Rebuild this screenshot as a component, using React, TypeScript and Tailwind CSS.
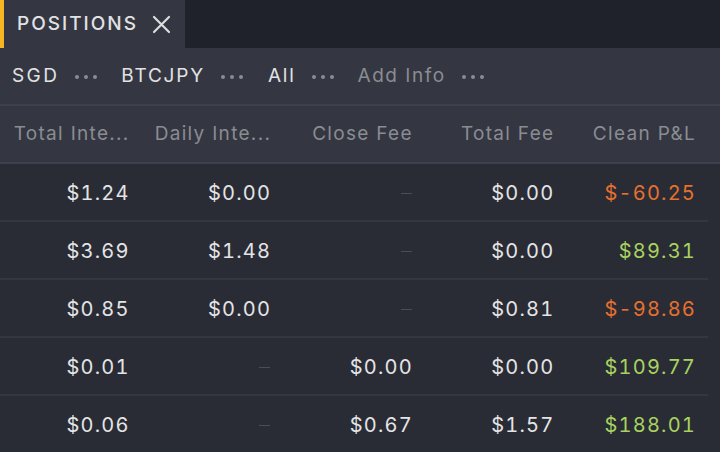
import React from "react";

const Dots = () => (
  <span className="flex items-center gap-[5px] ml-4 mr-6 mt-[1px]">
    <span className="w-[4px] h-[4px] rounded-full bg-[#8a8c93]" />
    <span className="w-[4px] h-[4px] rounded-full bg-[#8a8c93]" />
    <span className="w-[4px] h-[4px] rounded-full bg-[#8a8c93]" />
  </span>
);

type Cell = string | null;
const rows: { v: Cell[]; pnl: string; pos: boolean }[] = [
  { v: ["$1.24", "$0.00", null, "$0.00"], pnl: "$-60.25", pos: false },
  { v: ["$3.69", "$1.48", null, "$0.00"], pnl: "$89.31", pos: true },
  { v: ["$0.85", "$0.00", null, "$0.81"], pnl: "$-98.86", pos: false },
  { v: ["$0.01", null, "$0.00", "$0.00"], pnl: "$109.77", pos: true },
  { v: ["$0.06", null, "$0.67", "$1.57"], pnl: "$188.01", pos: true },
];

const headers = ["Total Inte...", "Daily Inte...", "Close Fee", "Total Fee", "Clean P&L"];

export default function App() {
  return (
    <div
      className="w-[720px] h-[452px] overflow-hidden bg-[#2a2c35] text-[#e4e4e6]"
      style={{ fontFamily: "Inter, 'Noto Sans', sans-serif" }}
    >
      {/* Tab bar */}
      <div className="h-[48px] bg-[#1f222a] flex">
        <div className="w-[185px] h-full bg-[#343741] flex items-center pt-[1px] relative">
          <div className="absolute left-0 top-0 bottom-0 w-[4px] bg-[#f7b523]" />
          <span className="ml-[17px] text-[19px] font-medium tracking-[2px] text-[#e2e2e4]">POSITIONS</span>
          <svg className="ml-[14px]" width="19" height="19" viewBox="0 0 19 19">
            <path d="M2 2L17 17M17 2L2 17" stroke="#dcdcde" strokeWidth="2.2" strokeLinecap="round" />
          </svg>
        </div>
      </div>
      {/* Toolbar */}
      <div className="h-[58px] bg-[#343741] flex items-center pl-[12px] text-[19px] tracking-[1.8px] border-b-[2px] border-[#3e414b]">
        <span className="text-[#e2e2e4] tracking-[2.4px]">SGD</span>
        <Dots />
        <span className="text-[#e2e2e4]">BTCJPY</span>
        <Dots />
        <span className="text-[#e2e2e4] ml-[1px]">All</span>
        <Dots />
        <span className="text-[#8a8c93] tracking-[1.5px]">Add Info</span>
        <Dots />
      </div>
      {/* Header */}
      <div className="h-[58px] bg-[#343741] border-b-[2px] border-[#3e414b] flex">
        <div className="w-[708px] grid grid-cols-5">
          {headers.map((h) => (
            <div key={h} className="flex items-center justify-end pr-[12px] text-[19px] tracking-[1.3px] text-[#8a8c93] whitespace-nowrap">
              {h}
            </div>
          ))}
        </div>
      </div>
      {/* Rows */}
      {rows.map((r, i) => (
        <div key={i} className="w-[708px] h-[58px] grid grid-cols-5 border-b-[2px] border-[#343640]">
          {r.v.map((c, j) => (
            <div key={j} className="flex items-center justify-end pr-[12px] pt-[2px] text-[20px] tracking-[1.2px] tabular-nums">
              {c ? (
                <span className="text-[#e4e4e6]">{c}</span>
              ) : (
                <span className="w-[11px] h-[1px] bg-[#4a4d57] mr-[1px]" />
              )}
            </div>
          ))}
          <div className={`flex items-center justify-end pr-[12px] pt-[2px] text-[20px] tracking-[1.2px] tabular-nums ${r.pos ? "text-[#a8d35f]" : "text-[#e7702f]"}`}>
            {r.pnl}
          </div>
        </div>
      ))}
    </div>
  );
}
